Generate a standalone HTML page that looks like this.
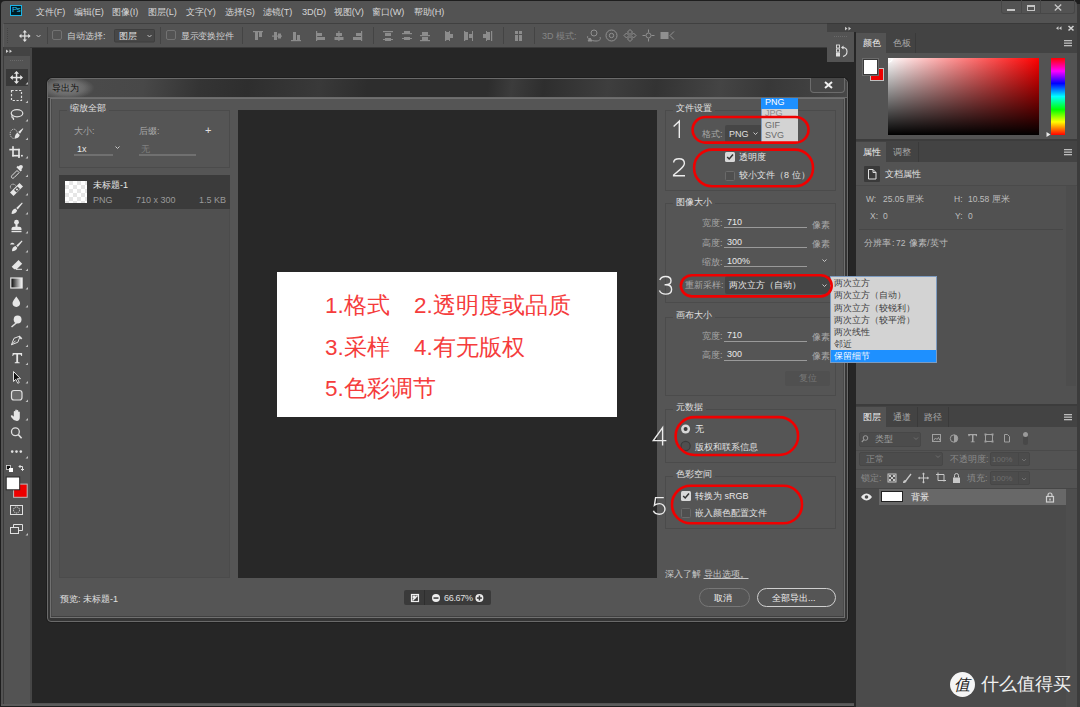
<!DOCTYPE html>
<html><head><meta charset="utf-8">
<style>
*{margin:0;padding:0;box-sizing:border-box}
html,body{width:1080px;height:707px;overflow:hidden;background:#262626;font-family:"Liberation Sans",sans-serif;}
.a{position:absolute}
.t{position:absolute;white-space:nowrap;line-height:12px;font-size:10px;color:#d6d6d6}
.s9{font-size:9px;line-height:12px}
svg{position:absolute;overflow:visible}
</style></head><body>
<!-- ===== FRAME ===== -->
<div class="a" style="left:0;top:0;width:1080px;height:707px;background:#1e1e1e"></div>
<div class="a" style="left:1px;top:1px;width:1076px;height:703px;background:#535353;border-radius:4px 4px 0 0"></div>
<!-- menubar -->
<div id="menubar">
<div class="a" style="left:10px;top:5px;width:12px;height:11px;background:#001d26;border:1px solid #1ab4e8"></div>
<div class="t" style="left:12px;top:4px;font-size:8px;color:#2fc3f2;font-weight:normal;letter-spacing:-0.5px">Ps</div>
<div class="t" style="left:36px;top:6px;font-size:9.2px;letter-spacing:-0.1px">文件(F)</div>
<div class="t" style="left:74px;top:6px;font-size:9.2px;letter-spacing:-0.1px">编辑(E)</div>
<div class="t" style="left:112px;top:6px;font-size:9.2px;letter-spacing:-0.1px">图像(I)</div>
<div class="t" style="left:148px;top:6px;font-size:9.2px;letter-spacing:-0.1px">图层(L)</div>
<div class="t" style="left:186px;top:6px;font-size:9.2px;letter-spacing:-0.1px">文字(Y)</div>
<div class="t" style="left:225px;top:6px;font-size:9.2px;letter-spacing:-0.1px">选择(S)</div>
<div class="t" style="left:263px;top:6px;font-size:9.2px;letter-spacing:-0.1px">滤镜(T)</div>
<div class="t" style="left:302px;top:6px;font-size:9.2px;letter-spacing:-0.1px">3D(D)</div>
<div class="t" style="left:334px;top:6px;font-size:9.2px;letter-spacing:-0.1px">视图(V)</div>
<div class="t" style="left:372px;top:6px;font-size:9.2px;letter-spacing:-0.1px">窗口(W)</div>
<div class="t" style="left:414px;top:6px;font-size:9.2px;letter-spacing:-0.1px">帮助(H)</div>
<!-- window controls -->
<div class="a" style="left:1001px;top:0;width:74px;height:14px;border:1px solid #474747;border-top:none;border-radius:0 0 3px 3px"></div>
<div class="a" style="left:1021px;top:0;width:1px;height:14px;background:#474747"></div>
<div class="a" style="left:1040px;top:0;width:1px;height:14px;background:#474747"></div>
<div class="a" style="left:1007px;top:9px;width:8px;height:1.6px;background:#c4c4c4"></div>
<div class="a" style="left:1027px;top:5px;width:8px;height:6px;border:1.5px solid #c4c4c4;border-top-width:2px"></div>
<svg style="left:1054px;top:4px" width="8" height="7"><path d="M0.8 0.5L7.2 6.5M7.2 0.5L0.8 6.5" stroke="#c8c8c8" stroke-width="1.3"/></svg>
</div>

<!-- left strip + workspace -->
<div class="a" style="left:3px;top:47px;width:1px;height:657px;background:#3c3c3c"></div>
<div class="a" style="left:32px;top:47px;width:795px;height:656px;background:#262626"></div>
<div class="a" style="left:827px;top:62px;width:27px;height:641px;background:#262626"></div>
<div class="a" style="left:30px;top:47px;width:2px;height:656px;background:#464646"></div>
<div class="a" style="left:1px;top:704px;width:855px;height:2px;background:#5c5c5c"></div>

<!-- options bar -->
<div id="optbar">
<div class="a" style="left:3px;top:23px;width:824px;height:24px;background:#535353;border-top:1px solid #404040;border-left:1px solid #5e5e5e"></div>
<div class="a" style="left:4px;top:47px;width:823px;height:1px;background:#3a3a3a"></div>
<svg style="left:0;top:0" width="830" height="50">
<g stroke="#444" stroke-width="1" stroke-dasharray="1 1"><path d="M7.5 28V44"/></g>
<g stroke="#444" stroke-width="1"><path d="M47.5 27V44M160.5 27V44M242.5 27V44M373.5 27V44M503.5 27V44M534.5 27V44"/></g>
<!-- move icon -->
<g fill="#e0e0e0"><rect x="24.2" y="31.5" width="1.2" height="9"/><rect x="20" y="35.4" width="9.6" height="1.2"/>
<path d="M24.8 30l2.2 2.4h-4.4z M24.8 42l2.2-2.4h-4.4z M19 36l2.4-2.2v4.4z M30.6 36l-2.4-2.2v4.4z"/></g>
<path d="M36.5 35l2 2 2-2" stroke="#bdbdbd" fill="none" stroke-width="1"/>
<rect x="52.5" y="30.5" width="9" height="9" rx="1.5" fill="none" stroke="#727272"/>
<rect x="114.5" y="29.5" width="40" height="12.5" rx="1" fill="#474747" stroke="#3e3e3e"/>
<path d="M147.5 35l2 2 2-2" stroke="#bdbdbd" fill="none" stroke-width="1"/>
<rect x="166.5" y="30.5" width="9" height="9" rx="1.5" fill="none" stroke="#727272"/>
<!-- align icons -->
<g fill="#8c8c8c">
<rect x="253" y="31" width="10" height="1.2"/><rect x="255" y="32" width="3" height="8"/><rect x="259" y="32" width="3" height="5"/>
<rect x="272" y="35.5" width="10" height="1.2"/><rect x="274" y="32" width="3" height="8"/><rect x="278" y="33.5" width="3" height="5"/>
<rect x="291" y="40" width="10" height="1.2"/><rect x="293" y="32" width="3" height="8"/><rect x="297" y="35" width="3" height="5"/>
<rect x="316" y="31" width="1.2" height="10"/><rect x="317" y="33" width="5" height="3"/><rect x="317" y="37" width="8" height="3"/>
<rect x="338.3" y="31" width="1.2" height="10"/><rect x="336" y="33" width="6" height="3"/><rect x="334.5" y="37" width="9" height="3"/>
<rect x="361" y="31" width="1.2" height="10"/><rect x="356" y="33" width="5" height="3"/><rect x="353" y="37" width="8" height="3"/>
<rect x="383" y="31" width="10" height="1.2"/><rect x="385" y="33" width="6" height="3"/><rect x="385" y="38" width="6" height="3"/><rect x="383" y="39" width="10" height="1"/>
<rect x="402" y="33" width="10" height="1.2"/><rect x="404" y="31" width="6" height="3"/><rect x="404" y="37" width="6" height="3"/><rect x="402" y="38" width="10" height="1"/>
<rect x="420" y="35" width="10" height="1.2"/><rect x="422" y="32" width="6" height="3"/><rect x="422" y="37" width="6" height="3"/><rect x="420" y="40" width="10" height="1.2"/>
<rect x="445" y="31" width="1.2" height="10"/><rect x="446" y="32" width="3" height="8"/><rect x="450" y="34" width="3" height="4"/><rect x="449" y="31" width="1" height="10"/>
<rect x="464" y="31" width="1.2" height="10"/><rect x="465" y="32" width="3" height="8"/><rect x="469" y="34" width="3" height="4"/><rect x="472" y="31" width="1" height="10"/>
<rect x="491" y="31" width="1.2" height="10"/><rect x="487" y="32" width="3" height="8"/><rect x="483" y="34" width="3" height="4"/><rect x="486" y="31" width="1" height="10"/>
<rect x="515" y="31" width="3" height="3"/><rect x="519" y="31" width="3" height="3"/><rect x="515" y="35" width="3" height="6"/><rect x="519" y="35" width="3" height="6"/>
</g>
<!-- 3d icons -->
<g stroke="#909090" fill="none" stroke-width="1">
<circle cx="594" cy="33" r="3"/><path d="M588 36c-2 2 2 5 8 5 4 0 5-2 4-4"/><path d="M590 38l-2 3h4z" fill="#909090"/>
<circle cx="611.5" cy="35.5" r="5.5"/><circle cx="611.5" cy="35.5" r="2.2"/>
<path d="M630 29.5l2.5 2.5-2.5 2.5-2.5-2.5z M630 36.5l2.5 2.5-2.5 2.5-2.5-2.5z M626.5 33l2.5 2.5-2.5 2.5-2.5-2.5z M633.5 33l2.5 2.5-2.5 2.5-2.5-2.5z"/>
<circle cx="648.5" cy="35.5" r="2.5"/><path d="M648.5 29.5v3M648.5 38.5v3M642.5 35.5h3M651.5 35.5h3"/>
<rect x="661" y="32.5" width="7" height="6" fill="#909090"/><path d="M674 31.5l-4 4 4 4"/>
</g>
</svg>
<div class="t s9" style="left:67px;top:30px;color:#d0d0d0">自动选择:</div>
<div class="t s9" style="left:119px;top:30px;color:#e0e0e0">图层</div>
<div class="t s9" style="left:181px;top:30px;color:#d0d0d0;letter-spacing:-0.3px">显示变换控件</div>
<div class="t s9" style="left:542px;top:30px;color:#858585">3D 模式:</div>
</div>

<!-- toolbar -->
<div id="toolbar">
<div class="a" style="left:4px;top:47px;width:26px;height:9px;background:#434343"></div>
<div class="a" style="left:4px;top:56px;width:26px;height:647px;background:#535353"></div>
<div class="a" style="left:6px;top:69px;width:22px;height:17px;background:#393939"></div>
<svg style="left:0;top:0" width="32" height="707">
<g fill="#d0d0d0"><path d="M6 49.5l2.5 1.7-2.5 1.7z M9.5 49.5l2.5 1.7-2.5 1.7z"/></g>
<g stroke="#6a6a6a" stroke-dasharray="1 1"><path d="M10 60.5H24"/></g>
<!-- corner triangles -->
<g fill="#bfbfbf">
<path d="M28 82v2.5h-2.5z"/><path d="M28 100.5v2.5h-2.5z"/><path d="M28 119v2.5h-2.5z"/><path d="M28 137.5v2.5h-2.5z"/><path d="M28 156v2.5h-2.5z"/>
<path d="M28 174.5v2.5h-2.5z"/><path d="M28 193v2.5h-2.5z"/><path d="M28 212v2.5h-2.5z"/><path d="M28 231v2.5h-2.5z"/><path d="M28 250v2.5h-2.5z"/>
<path d="M28 268.5v2.5h-2.5z"/><path d="M28 287v2.5h-2.5z"/><path d="M28 305v2.5h-2.5z"/><path d="M28 325v2.5h-2.5z"/><path d="M28 344.5v2.5h-2.5z"/>
<path d="M28 362.5v2.5h-2.5z"/><path d="M28 381v2.5h-2.5z"/><path d="M28 399.5v2.5h-2.5z"/><path d="M28 418v2.5h-2.5z"/><path d="M28 456v2.5h-2.5z"/><path d="M28 533v2.5h-2.5z"/>
</g>
<g fill="#e6e6e6" stroke="none">
<!-- move -->
<rect x="15.8" y="72.5" width="1.5" height="10"/><rect x="11.5" y="76.8" width="10" height="1.5"/>
<path d="M16.5 71l2.6 2.8h-5.2z M16.5 84l2.6-2.8h-5.2z M10 77.5l2.8-2.6v5.2z M23 77.5l-2.8-2.6v5.2z"/>
<!-- quick select brush -->
<path d="M22.8 128.3l0.5 0.5-3.3 5-1.8-1.8z M17.6 132.8l2.2 2.2c-0.6 2.4-2.6 3.5-5.2 3.5 0.2-2.8 1.3-5 3-5.7z"/>
<!-- crop -->
<rect x="12.2" y="146.2" width="1.6" height="10.3"/><rect x="12.2" y="154.9" width="7.6" height="1.6"/>
<rect x="9.3" y="148.8" width="10.5" height="1.6"/><rect x="18.2" y="148.8" width="1.6" height="9.2"/><rect x="21" y="154.9" width="1.8" height="1.6"/>
<!-- eyedropper -->
<path d="M19.5 165.5c0.8-0.8 2.2-0.8 2.8 0 0.7 0.7 0.7 2 0 2.7l-1 1 0.8 0.8-1.5 1.5-4.2-4.2 1.5-1.5 0.8 0.8z"/>
<!-- healing -->
<path d="M19.5 183l3.5 3.5-9.5 9.5-3.5-3.5z"/><path d="M17.5 186.5l2.5 2.5-3.5 3.5-2.5-2.5z" fill="#535353"/><path d="M17 188.3l1.2 1.2-1.2 1.2-1.2-1.2z"/>
<!-- brush -->
<path d="M22 202.5l0.7 0.7-5 6.2-1.5-1.5z M15.3 208.5l1.8 1.8c-0.5 2.5-2.5 3.8-5.5 3.8 0-3 1.2-5 3.7-5.6z"/>
<!-- stamp -->
<circle cx="16.5" cy="222.2" r="2.4"/><rect x="15.5" y="223.5" width="2" height="3.5"/><path d="M11.5 229c0-1.3 1-2.2 2.2-2.2h5.6c1.2 0 2.2 0.9 2.2 2.2v1h-10z"/><rect x="11.5" y="230.8" width="10" height="1.4"/>
<!-- history brush -->
<path d="M21.8 240.5l0.7 0.7-4.7 5.8-1.5-1.5z M15.5 246l1.8 1.8c-0.5 2.3-2.3 3.5-5.3 3.5 0-2.8 1.1-4.7 3.5-5.3z"/>
<path d="M10 244.5c0.5-1.3 1.5-1.8 2.5-1.8s1.8 0.8 2 1.8z"/>
<!-- eraser -->
<path d="M18.5 260l3.7 3.7-5.5 5.5h-2.5l-2.5-2.5z" /><rect x="16" y="268.8" width="6" height="1"/>
<!-- blur -->
<path d="M16.3 296.6c-1.6 2.6-3.8 4.8-3.8 6.5a3.8 3.8 0 0 0 7.6 0c0-1.7-2.2-3.9-3.8-6.5z"/>
<!-- dodge -->
<circle cx="17.6" cy="319.5" r="3.9"/>
<!-- pen -->
<path d="M19.5 335.5l2.8 2.8-1.2 1.2-2.8-2.8z"/>
<!-- type -->
<path d="M12.7 353h9.4v3h-0.8c-0.2-1-0.6-1.6-1.6-1.6h-1.6v7.2c0 0.7 0.3 0.8 1.6 0.8v0.8h-5v-0.8c1.3 0 1.6-0.1 1.6-0.8v-7.2h-1.6c-1 0-1.4 0.6-1.6 1.6h-0.8z"/>
<!-- hand -->
<path d="M13.8 420c-1.5-1.5-3-3.3-3-4 0-0.8 1-1 2-0.2l1 1v-5.3c0-0.8 1.5-0.8 1.5 0v3.5-5c0-0.8 1.5-0.8 1.5 0v5-4.3c0-0.8 1.5-0.8 1.5 0v4.5-3c0-0.8 1.5-0.8 1.5 0v5.3c0 2-1.2 3.5-3 3.5z"/>
</g>
<g stroke="#e0e0e0" fill="none" stroke-width="1.2">
<rect x="11.5" y="90.5" width="10" height="10" stroke-dasharray="2.2 1.6"/>
<ellipse cx="17" cy="113.3" rx="5.8" ry="3.6"/><path d="M12.5 115c-1 1.2-0.7 2.7 0.5 3.2 M13.5 117.5v2.5"/>
<ellipse cx="13.8" cy="133.8" rx="3.6" ry="4.6" stroke-dasharray="1 0.9" stroke-width="0.9"/>
<path d="M12 175.5c-0.8 0.8-0.8 1.7-0.2 2.3s1.5 0.6 2.3-0.2l5-5-2.1-2.1z" stroke-width="1"/>
<path d="M15.5 185.3c-1-1.2-3-1.6-4.2-0.5-1.3 1.1-1.2 2.9-0.2 3.9" stroke-dasharray="1.2 0.9" stroke-width="1"/>
<path d="M16.5 322.8l-5 4.2" stroke-width="1.5"/>
<path d="M18.8 336.5l-4.8 1.8-2.6 6.5 6.5-2.6 1.8-4.8z M11.8 344.5l3.8-3.8" stroke-width="1"/>
<rect x="11.5" y="390.5" width="10.5" height="9.5" rx="2.5" fill="#6a6a6a"/>
<circle cx="15.4" cy="431.7" r="3.9" stroke-width="1.3"/><path d="M18.3 434.6l3.3 3.6" stroke-width="1.6"/>
<path d="M9 469.5h3.5M19 466.5h3.5v4 M19 466.5l1.5-1.5M19 466.5l1.5 1.5 M22.5 470.5l-1.5-1.5M22.5 470.5l1.5-1.5" stroke-width="1"/>
<rect x="10.5" y="505.5" width="12" height="9" stroke-width="1"/><circle cx="16.5" cy="510" r="3" stroke-width="1" stroke-dasharray="1.2 0.8"/>
<rect x="10.5" y="527.5" width="8" height="6" stroke-width="1"/><path d="M13.5 527.5v-3h9v6h-4" stroke-width="1"/>
</g>
<rect x="10.8" y="278" width="11.3" height="10" fill="url(#grd)" stroke="#e6e6e6" stroke-width="1.2"/>
<defs><linearGradient id="grd"><stop offset="0" stop-color="#000"/><stop offset="1" stop-color="#fff"/></linearGradient></defs>
<path d="M13.5 371.5v10l2.3-2.2 2 4 1.5-0.8-2-3.8h3.2z" fill="#111" stroke="#e0e0e0" stroke-width="1"/>
<g fill="#e0e0e0"><circle cx="12.2" cy="451.6" r="1.3"/><circle cx="16.5" cy="451.6" r="1.3"/><circle cx="20.8" cy="451.6" r="1.3"/></g>
<rect x="6.5" y="465.5" width="4" height="4" fill="#111" stroke="#ddd" stroke-width="0.8"/><rect x="9" y="468" width="4" height="4" fill="#fff"/>
<rect x="13.6" y="484.1" width="13.6" height="13.2" fill="#ee0000" stroke="#bdbdbd" stroke-width="1"/>
<rect x="6.2" y="477" width="13.5" height="12.8" fill="#ffffff" stroke="#2a2a2a" stroke-width="1"/>
</svg>
</div>

<!-- right dock -->
<div id="dock">
<div class="a" style="left:827px;top:23px;width:250px;height:9px;background:#434343;border-top:1px solid #393939"></div>
<div class="a" style="left:827px;top:32px;width:27px;height:30px;background:#535353"></div>
<div class="a" style="left:854px;top:32px;width:2px;height:675px;background:#262626"></div>
<div class="a" style="left:856px;top:32px;width:221px;height:675px;background:#535353"></div>
<div class="a" style="left:1077px;top:4px;width:3px;height:703px;background:#3c3c3c"></div>
<!-- color panel -->
<div class="a" style="left:856px;top:32px;width:221px;height:21px;background:#434343"></div>
<div class="a" style="left:856px;top:33px;width:30px;height:20px;background:#535353"></div>
<div class="a" style="left:915px;top:33px;width:1px;height:20px;background:#3a3a3a"></div>
<div class="t s9" style="left:863px;top:37px;color:#f0f0f0">颜色</div>
<div class="t s9" style="left:893px;top:37px;color:#a8a8a8">色板</div>
<div class="a" style="left:888px;top:58px;width:151px;height:77px;background:linear-gradient(to bottom,rgba(0,0,0,0),#000),linear-gradient(to right,#fff,#f00)"></div>
<div class="a" style="left:1051px;top:58px;width:14px;height:77px;background:linear-gradient(to bottom,#f00 0%,#f0f 17%,#00f 33%,#0ff 50%,#0f0 67%,#ff0 83%,#f00 100%)"></div>
<div class="a" style="left:870px;top:68px;width:14px;height:13px;background:#ee0000;border:1px solid #c0c0c0"></div>
<div class="a" style="left:863px;top:59px;width:15px;height:16px;background:#fff;border:1px solid #3a3a3a;box-shadow:0 0 0 1px #6a6a6a"></div>
<div class="a" style="left:856px;top:139px;width:221px;height:2px;background:#3c3c3c"></div>
<!-- properties -->
<div class="a" style="left:856px;top:141px;width:221px;height:21px;background:#434343"></div>
<div class="a" style="left:856px;top:142px;width:30px;height:20px;background:#535353"></div>
<div class="a" style="left:918px;top:142px;width:1px;height:20px;background:#3a3a3a"></div>
<div class="t s9" style="left:863px;top:146px;color:#f0f0f0">属性</div>
<div class="t s9" style="left:893px;top:146px;color:#a8a8a8">调整</div>
<div class="a" style="left:864px;top:166px;width:16px;height:16px;background:#3a3a3a;border-radius:1px"></div>
<div class="t s9" style="left:885px;top:168px;color:#e0e0e0">文档属性</div>
<div class="a" style="left:856px;top:185px;width:221px;height:219px;background:#515151;border-top:1px solid #4a4a4a"></div>
<div class="a" style="left:1066px;top:186px;width:10px;height:200px;background:#4d4d4d"></div>
<div class="a" style="left:859px;top:229px;width:204px;height:1px;background:#474747"></div>
<div class="t" style="left:866px;top:193px;font-size:8.5px;color:#bdbdbd">W:</div>
<div class="t" style="left:883px;top:193px;font-size:8.5px;color:#bdbdbd">25.05</div>
<div class="t s9" style="left:906px;top:193px;color:#bdbdbd">厘米</div>
<div class="t" style="left:954px;top:193px;font-size:8.5px;color:#bdbdbd">H:</div>
<div class="t" style="left:968px;top:193px;font-size:8.5px;color:#bdbdbd">10.58</div>
<div class="t s9" style="left:992px;top:193px;color:#bdbdbd">厘米</div>
<div class="t" style="left:870px;top:210px;font-size:8.5px;color:#bdbdbd">X:</div>
<div class="t" style="left:883px;top:210px;font-size:8.5px;color:#bdbdbd">0</div>
<div class="t" style="left:955px;top:210px;font-size:8.5px;color:#bdbdbd">Y:</div>
<div class="t" style="left:968px;top:210px;font-size:8.5px;color:#bdbdbd">0</div>
<div class="t s9" style="left:864px;top:237px;color:#bdbdbd">分辨率</div><div class="t s9" style="left:892px;top:237px;color:#bdbdbd">:</div><div class="t" style="left:896px;top:237px;font-size:8.5px;color:#bdbdbd">72</div><div class="t s9" style="left:909px;top:237px;color:#bdbdbd">像素</div><div class="t s9" style="left:927px;top:237px;color:#bdbdbd">/英寸</div>
<div class="a" style="left:856px;top:404px;width:221px;height:2px;background:#3c3c3c"></div>
<!-- layers -->
<div class="a" style="left:856px;top:406px;width:221px;height:21px;background:#434343"></div>
<div class="a" style="left:856px;top:407px;width:30px;height:20px;background:#535353"></div>
<div class="a" style="left:917px;top:407px;width:1px;height:20px;background:#3a3a3a"></div>
<div class="a" style="left:948px;top:407px;width:1px;height:20px;background:#3a3a3a"></div>
<div class="t s9" style="left:863px;top:411px;color:#f0f0f0">图层</div>
<div class="t s9" style="left:893px;top:411px;color:#a8a8a8">通道</div>
<div class="t s9" style="left:924px;top:411px;color:#a8a8a8">路径</div>
<div class="a" style="left:859px;top:432px;width:62px;height:15px;background:#4c4c4c;border:1px solid #474747;border-radius:2px"></div>
<div class="t s9" style="left:875px;top:433px;color:#a0a0a0">类型</div>
<div class="a" style="left:856px;top:450px;width:221px;height:1px;background:#4a4a4a"></div>
<div class="a" style="left:859px;top:452px;width:84px;height:14px;background:#4c4c4c;border:1px solid #474747;border-radius:2px"></div>
<div class="t s9" style="left:866px;top:453px;color:#8a8a8a">正常</div>
<div class="t s9" style="left:950px;top:453px;color:#8a8a8a">不透明度:</div>
<div class="a" style="left:990px;top:452px;width:40px;height:14px;background:#4c4c4c;border:1px solid #474747;border-radius:2px"></div>
<div class="a" style="left:1018px;top:452px;width:1px;height:14px;background:#474747"></div>
<div class="t" style="left:992px;top:454px;font-size:8px;color:#6e6e6e">100%</div>
<div class="a" style="left:856px;top:469px;width:221px;height:1px;background:#4a4a4a"></div>
<div class="t s9" style="left:861px;top:472px;color:#8a8a8a">锁定:</div>
<div class="t s9" style="left:967px;top:472px;color:#8a8a8a">填充:</div>
<div class="a" style="left:990px;top:471px;width:40px;height:14px;background:#4c4c4c;border:1px solid #474747;border-radius:2px"></div>
<div class="a" style="left:1018px;top:471px;width:1px;height:14px;background:#474747"></div>
<div class="t" style="left:992px;top:473px;font-size:8px;color:#6e6e6e">100%</div>
<div class="a" style="left:856px;top:488px;width:221px;height:219px;background:#4b4b4b"></div>
<div class="a" style="left:856px;top:488px;width:221px;height:1px;background:#464646"></div>
<div class="a" style="left:1066px;top:489px;width:11px;height:218px;background:#4e4e4e"></div>
<div class="a" style="left:879px;top:489px;width:187px;height:16px;background:#686868"></div>
<div class="a" style="left:881px;top:491px;width:22px;height:11px;background:#fff;border:1px solid #222"></div>
<div class="t s9" style="left:911px;top:491px;color:#f0f0f0">背景</div>
<div class="t" style="left:981px;top:673px;font-size:17.5px;line-height:22px;color:#f0f0f0;letter-spacing:0px">什么值得买</div>
<div class="a" style="left:950px;top:672px;width:25px;height:25px;border-radius:50%;background:#f5f5f5"></div>
<div class="t" style="left:954px;top:675px;font-size:16px;line-height:19px;color:#222;font-style:italic">值</div>
<svg style="left:0;top:0" width="1080" height="707">
<!-- top strip arrows -->
<g fill="#c8c8c8"><path d="M845 26.8l2.5 1.8-2.5 1.8z M848.5 26.8l2.5 1.8-2.5 1.8z"/>
<path d="M1058.5 26.3l-2.5 1.9 2.5 1.9z M1061.5 26.3l-2.5 1.9 2.5 1.9z"/></g>
<path d="M1068.5 26l5 4.5M1073.5 26l-5 4.5" stroke="#d0d0d0" stroke-width="1.6"/>
<g stroke="#6a6a6a" stroke-dasharray="1 1"><path d="M834 36.5H848"/></g>
<!-- history icon -->
<g fill="#e0e0e0"><rect x="836.5" y="45" width="3" height="3" fill="none" stroke="#e0e0e0" stroke-width="0.9"/><rect x="836.5" y="49" width="3" height="3" fill="none" stroke="#e0e0e0" stroke-width="0.9"/><rect x="836" y="52.5" width="4" height="4"/></g>
<path d="M842.5 47.5c3 0 4.5 1.5 4.5 4s-2 4.5-4 5" stroke="#e0e0e0" fill="none" stroke-width="1.1"/><path d="M841 47.5l2.5-2v4z" fill="#e0e0e0"/>
<!-- panel menus -->
<g fill="#bdbdbd"><rect x="1064" y="40" width="8" height="1.3"/><rect x="1064" y="42.5" width="8" height="1.3"/><rect x="1064" y="45" width="8" height="1.3"/>
<rect x="1064" y="149" width="8" height="1.3"/><rect x="1064" y="151.5" width="8" height="1.3"/><rect x="1064" y="154" width="8" height="1.3"/>
<rect x="1064" y="414" width="8" height="1.3"/><rect x="1064" y="416.5" width="8" height="1.3"/><rect x="1064" y="419" width="8" height="1.3"/></g>
<!-- color cursor & slider -->
<path d="M888.4 62.2A3.8 3.8 0 0 0 892.2 58.4" fill="none" stroke="#fff" stroke-width="1.3"/>
<path d="M1046.5 132v5l4-2.5z" fill="#e8e8e8"/>
<!-- doc icon -->
<path d="M868.5 169.5h4.5l3 3v6.5h-7.5z M873 169.5v3h3" fill="none" stroke="#e0e0e0" stroke-width="1"/>
<!-- layers filter -->
<circle cx="865.5" cy="438" r="2.3" fill="none" stroke="#9a9a9a" stroke-width="1"/><path d="M864 439.7l-2.2 2.3" stroke="#9a9a9a" stroke-width="1.1"/>
<path d="M914 437.5l2 2 2-2" stroke="#6e6e6e" fill="none"/>
<path d="M936 455.5l2 2 2-2" stroke="#6e6e6e" fill="none"/>
<path d="M1022 459l2 2 2-2" stroke="#6e6e6e" fill="none"/><path d="M1022 478l2 2 2-2" stroke="#6e6e6e" fill="none"/>
<g fill="none" stroke="#a0a0a0" stroke-width="1">
<rect x="932.5" y="434.5" width="8" height="7"/><path d="M933.5 440.5l2-2.5 1.5 1.5 1.5-2 1.5 3"/>
<circle cx="954" cy="438.5" r="3.7"/>
<rect x="985.5" y="434.5" width="7" height="7"/>
<path d="M1004.5 434.5h3l2 2v5.5h-5z"/>
</g>
<path d="M954 434.8a3.7 3.7 0 0 1 0 7.4z" fill="#a0a0a0"/>
<path d="M968 434h9v2.2h-0.8l-0.7-1h-2v6.3h1.2v0.8h-3.9v-0.8h1.2v-6.3h-2l-0.7 1h-0.8z" fill="#a8a8a8"/>
<g fill="#a0a0a0"><rect x="984.5" y="433.5" width="2" height="2"/><rect x="991.5" y="433.5" width="2" height="2"/><rect x="984.5" y="440.5" width="2" height="2"/><rect x="991.5" y="440.5" width="2" height="2"/></g>
<rect x="1023" y="432" width="5" height="13" rx="2.5" fill="#484848"/><circle cx="1025.5" cy="434.5" r="2.5" fill="#9a9a9a"/>
<!-- lock row icons -->
<g fill="#c8c8c8">
<rect x="888" y="474" width="8" height="8" fill="none" stroke="#c8c8c8" stroke-width="1"/>
<rect x="889" y="475" width="2" height="2"/><rect x="893" y="475" width="2" height="2"/><rect x="891" y="477" width="2" height="2"/><rect x="889" y="479" width="2" height="2"/><rect x="893" y="479" width="2" height="2"/>
<path d="M903 483c0-2 1-3 2.5-3l5-6.5 1 1-5 6.5c0 1.5-1.5 2-3.5 2z"/>
<path d="M1040 500.5h7v-4.5h-7z" fill="none"/>
<rect x="953" y="477.5" width="7" height="5.5"/>
</g>
<g stroke="#c8c8c8" fill="none" stroke-width="1">
<path d="M923.5 473v10M918.5 478h10"/>
<path d="M936 474.5h8v7 M938 472.5v8h8"/>
<path d="M954.5 477.5v-2a2 2 0 0 1 4 0v2"/>
</g>
<g fill="#c8c8c8"><path d="M923.5 472.5l1.6 1.8h-3.2z M923.5 483.5l1.6-1.8h-3.2z M918 478l1.8-1.6v3.2z M929 478l-1.8-1.6v3.2z"/></g>
<!-- eye -->
<path d="M861 497c2-2.8 4-3.5 5.5-3.5s3.5 0.7 5.5 3.5c-2 2.8-4 3.5-5.5 3.5s-3.5-0.7-5.5-3.5z" fill="#e8e8e8"/>
<circle cx="866.5" cy="497" r="1.8" fill="#4b4b4b"/>
<!-- layer lock -->
<rect x="1046.5" y="496.5" width="7" height="5.5" fill="none" stroke="#d0d0d0" stroke-width="1.2"/>
<path d="M1048 496.5v-1.5a2 2 0 0 1 4 0v1.5" fill="none" stroke="#d0d0d0" stroke-width="1.2"/>
<rect x="1049.3" y="498.5" width="1.4" height="2" fill="#d0d0d0"/>
</svg>
</div>


<!-- dialog -->
<div id="dialog">
<div class="a" style="left:47px;top:78px;width:801px;height:544px;background:#353535;border:1px solid #6a6a6a;border-radius:5px 5px 4px 4px;box-shadow:0 0 0 1px #1e1e1e"></div>
<div class="a" style="left:48px;top:79px;width:799px;height:19px;border-radius:4px 4px 0 0;background:linear-gradient(97deg,#4c4c4c 0%,#484848 12%,#343434 19%,#2e2e2e 25%,#393939 34%,#2d2d2d 40%,#2d2d2d 55%,#3c3c3c 58%,#2e2e2e 62%,#3e3e3e 70%,#333333 76%,#444444 84%,#383838 90%,#474747 100%)"></div>
<div class="a" style="left:48px;top:97px;width:799px;height:1px;background:#6a6a6a"></div>
<div class="a" style="left:50px;top:98px;width:795px;height:520px;background:#555555;border:1px solid #707070"></div>
<div class="a" style="left:51px;top:616px;width:793px;height:1px;background:#404040"></div><div class="a" style="left:51px;top:99px;width:1px;height:517px;background:#4a4a4a"></div><div class="a" style="left:843px;top:99px;width:1px;height:517px;background:#4a4a4a"></div>
<div class="a" style="left:48px;top:79px;width:60px;height:18px;overflow:hidden;border-radius:4px 0 0 0"><div class="a" style="left:-8px;top:-2px;width:54px;height:22px;background:radial-gradient(ellipse at center,rgba(135,135,135,0.9) 0%,rgba(125,125,125,0.6) 45%,rgba(110,110,110,0) 72%)"></div></div><div class="t" style="left:52px;top:82px;color:#0c0c0c;font-size:9.3px">导出为</div>
<!-- close btn -->
<div class="a" style="left:810px;top:78px;width:35px;height:15px;border:1px solid #6c6c6c;border-top:none;border-radius:0 0 4px 4px;background:#474747"></div>
<svg style="left:824px;top:81px" width="9" height="8"><path d="M1 1L8 7M8 1L1 7" stroke="#f0f0f0" stroke-width="2"/></svg>

<!-- left column -->
<div class="a" style="left:59px;top:110px;width:171px;height:58px;border:1px solid #4b4b4b"></div>
<div class="a" style="left:67px;top:104px;width:42px;height:9px;background:#555555"></div>
<div class="t s9" style="left:70px;top:102px;color:#e0e0e0">缩放全部</div>
<div class="t s9" style="left:74px;top:125px;color:#a8a8a8">大小:</div>
<div class="t s9" style="left:139px;top:125px;color:#a8a8a8">后缀:</div>
<div class="t" style="left:205px;top:124px;color:#e0e0e0;font-size:11px">+</div>
<div class="t s9" style="left:77px;top:143px;color:#e8e8e8">1x</div>
<div class="a" style="left:74px;top:154px;width:39px;height:2px;background:#707070"></div>
<svg style="left:115px;top:146px" width="6" height="4"><path d="M0.5 0.5l2 2 2-2" stroke="#c8c8c8" fill="none"/></svg>
<div class="t s9" style="left:141px;top:143px;color:#808080">无</div>
<div class="a" style="left:139px;top:154px;width:57px;height:2px;background:#707070"></div>
<div class="a" style="left:59px;top:175px;width:171px;height:403px;background:#505050;border:1px solid #4b4b4b"></div>
<div class="a" style="left:59px;top:175px;width:171px;height:34px;background:#3b3b3b"></div>
<div class="a" style="left:65px;top:181px;width:22px;height:22px;background-color:#fff;background-image:linear-gradient(45deg,#e6e6e6 25%,transparent 25%,transparent 75%,#e6e6e6 75%),linear-gradient(45deg,#e6e6e6 25%,transparent 25%,transparent 75%,#e6e6e6 75%);background-size:8px 8px;background-position:0 0,4px 4px"></div>
<div class="t s9" style="left:93px;top:179px;color:#e8e8e8">未标题-1</div>
<div class="t s9" style="left:93px;top:194px;color:#9a9a9a">PNG</div>
<div class="t s9" style="left:136px;top:194px;color:#9a9a9a">710 x 300</div>
<div class="t s9" style="left:199px;top:194px;color:#9a9a9a">1.5 KB</div>
<div class="t s9" style="left:60px;top:593px;color:#e0e0e0">预览: 未标题-1</div>

<!-- preview -->
<div class="a" style="left:238px;top:110px;width:419px;height:468px;background:#282828"></div>
<div class="a" style="left:277px;top:272px;width:340px;height:145px;background:#fff"></div>
<div class="t" style="left:325px;top:293px;font-size:22.5px;line-height:26px;color:#f53c3c;font-weight:300">1.格式</div>
<div class="t" style="left:414px;top:293px;font-size:22.5px;line-height:26px;color:#f53c3c;font-weight:300">2.透明度或品质</div>
<div class="t" style="left:325px;top:335px;font-size:22.5px;line-height:26px;color:#f53c3c;font-weight:300">3.采样</div>
<div class="t" style="left:414px;top:335px;font-size:22.5px;line-height:26px;color:#f53c3c;font-weight:300">4.有无版权</div>
<div class="t" style="left:325px;top:376px;font-size:22.5px;line-height:26px;color:#f53c3c;font-weight:300">5.色彩调节</div>
<!-- zoom ctrl -->
<div class="a" style="left:404px;top:590px;width:87px;height:15px;background:#3a3a3a;border-radius:2px"></div>
<div class="a" style="left:424px;top:590px;width:1px;height:15px;background:#2e2e2e"></div>
<svg style="left:0;top:0" width="1080" height="707">
<rect x="411.5" y="594.5" width="7" height="7" fill="none" stroke="#eee" stroke-width="1.2"/><path d="M412.5 600.5l5-5" stroke="#eee" stroke-width="1.5"/><rect x="412.5" y="595.5" width="3" height="3" fill="#eee"/>
<circle cx="436" cy="598" r="4" fill="#eee"/><rect x="433.5" y="597.3" width="5" height="1.5" fill="#3a3a3a"/>
<circle cx="479.4" cy="598" r="4" fill="#eee"/><rect x="476.9" y="597.3" width="5" height="1.5" fill="#3a3a3a"/><rect x="478.7" y="595.5" width="1.5" height="5" fill="#3a3a3a"/>
</svg>
<div class="t" style="left:444px;top:592px;font-size:9px;color:#e0e0e0;letter-spacing:-0.3px">66.67%</div>

<!-- right column groups -->
<div class="a" style="left:665px;top:110px;width:171px;height:81px;border:1px solid #4b4b4b"></div>
<div class="a" style="left:673px;top:104px;width:42px;height:9px;background:#555555"></div>
<div class="t s9" style="left:676px;top:102px;color:#e0e0e0">文件设置</div>
<div class="a" style="left:665px;top:203px;width:171px;height:100px;border:1px solid #4b4b4b"></div>
<div class="a" style="left:673px;top:198px;width:42px;height:9px;background:#555555"></div>
<div class="t s9" style="left:676px;top:196px;color:#e0e0e0">图像大小</div>
<div class="a" style="left:665px;top:317px;width:171px;height:79px;border:1px solid #4b4b4b"></div>
<div class="a" style="left:673px;top:311px;width:42px;height:9px;background:#555555"></div>
<div class="t s9" style="left:676px;top:309px;color:#e0e0e0">画布大小</div>
<div class="a" style="left:665px;top:409px;width:171px;height:54px;border:1px solid #4b4b4b"></div>
<div class="a" style="left:673px;top:403px;width:33px;height:9px;background:#555555"></div>
<div class="t s9" style="left:676px;top:401px;color:#e0e0e0">元数据</div>
<div class="a" style="left:665px;top:476px;width:171px;height:53px;border:1px solid #4b4b4b"></div>
<div class="a" style="left:673px;top:470px;width:42px;height:9px;background:#555555"></div>
<div class="t s9" style="left:676px;top:468px;color:#e0e0e0">色彩空间</div>

<!-- file settings -->
<div class="t s9" style="left:702px;top:128px;color:#a8a8a8">格式:</div>
<div class="a" style="left:725px;top:125px;width:37px;height:18px;background:#464646;border-radius:2px"></div>
<div class="t s9" style="left:729px;top:128px;color:#e0e0e0">PNG</div>
<svg style="left:753px;top:132px" width="6" height="4"><path d="M0.5 0.5l2 2 2-2" stroke="#c8c8c8" fill="none"/></svg>
<div class="a" style="left:725px;top:152px;width:10px;height:10px;background:#d8d8d8;border-radius:1.5px"></div>
<svg style="left:726px;top:153px" width="8" height="8"><path d="M1.2 4l2 2 3.8-4.5" stroke="#333" stroke-width="1.5" fill="none"/></svg>
<div class="t s9" style="left:739px;top:151px;color:#e8e8e8">透明度</div>
<div class="a" style="left:725px;top:171px;width:10px;height:10px;border:1px solid #6a6a6a;border-radius:1.5px;background:#4f4f4f"></div>
<div class="t s9" style="left:739px;top:169px;color:#e0e0e0">较小文件（8 位）</div>

<!-- image size -->
<div class="t s9" style="left:702px;top:217px;color:#a8a8a8">宽度:</div>
<div class="t s9" style="left:727px;top:216px;color:#e8e8e8">710</div>
<div class="a" style="left:724px;top:227px;width:83px;height:1px;background:#9a9a9a"></div>
<div class="t s9" style="left:812px;top:219px;color:#a8a8a8">像素</div>
<div class="t s9" style="left:702px;top:237px;color:#a8a8a8">高度:</div>
<div class="t s9" style="left:727px;top:236px;color:#e8e8e8">300</div>
<div class="a" style="left:724px;top:247px;width:83px;height:1px;background:#9a9a9a"></div>
<div class="t s9" style="left:812px;top:238px;color:#a8a8a8">像素</div>
<div class="t s9" style="left:702px;top:256px;color:#a8a8a8">缩放:</div>
<div class="t s9" style="left:727px;top:255px;color:#e8e8e8">100%</div>
<div class="a" style="left:724px;top:266px;width:83px;height:1px;background:#9a9a9a"></div>
<svg style="left:822px;top:259px" width="6" height="4"><path d="M0.5 0.5l2 2 2-2" stroke="#c8c8c8" fill="none"/></svg>
<div class="t s9" style="left:685px;top:279px;color:#a8a8a8">重新采样:</div>
<div class="a" style="left:725px;top:276px;width:105px;height:18px;background:#454545;border-radius:2px"></div>
<div class="t s9" style="left:729px;top:279px;color:#e8e8e8">两次立方（自动）</div>
<svg style="left:822px;top:284px" width="6" height="4"><path d="M0.5 0.5l2 2 2-2" stroke="#c8c8c8" fill="none"/></svg>

<!-- canvas size -->
<div class="t s9" style="left:702px;top:330px;color:#a8a8a8">宽度:</div>
<div class="t s9" style="left:727px;top:329px;color:#e8e8e8">710</div>
<div class="a" style="left:724px;top:341px;width:83px;height:1px;background:#9a9a9a"></div>
<div class="t s9" style="left:812px;top:331px;color:#a8a8a8">像素</div>
<div class="t s9" style="left:702px;top:349px;color:#a8a8a8">高度:</div>
<div class="t s9" style="left:727px;top:348px;color:#e8e8e8">300</div>
<div class="a" style="left:724px;top:360px;width:83px;height:1px;background:#9a9a9a"></div>
<div class="t s9" style="left:812px;top:350px;color:#a8a8a8">像素</div>
<div class="a" style="left:785px;top:371px;width:45px;height:15px;background:#505050;border-radius:2px"></div>
<div class="t s9" style="left:799px;top:372px;color:#777">复位</div>

<!-- metadata -->
<svg style="left:0;top:0" width="1080" height="707">
<circle cx="685.6" cy="429" r="4.5" fill="#d8d8d8"/><circle cx="685.6" cy="429" r="2" fill="#3a3a3a"/>
<circle cx="685.6" cy="446" r="4.6" fill="#4f4f4f" stroke="#3c3c3c" stroke-width="1.2"/>
</svg>
<div class="t s9" style="left:695px;top:423px;color:#e8e8e8">无</div>
<div class="t s9" style="left:695px;top:441px;color:#e0e0e0">版权和联系信息</div>

<!-- color space -->
<div class="a" style="left:681px;top:491px;width:10px;height:10px;background:#d8d8d8;border-radius:1.5px"></div>
<svg style="left:682px;top:492px" width="8" height="8"><path d="M1.2 4l2 2 3.8-4.5" stroke="#333" stroke-width="1.5" fill="none"/></svg>
<div class="t s9" style="left:695px;top:490px;color:#e8e8e8">转换为 sRGB</div>
<div class="a" style="left:681px;top:508px;width:10px;height:10px;border:1px solid #6a6a6a;border-radius:1.5px;background:#4f4f4f"></div>
<div class="t s9" style="left:695px;top:507px;color:#e0e0e0">嵌入颜色配置文件</div>

<!-- footer -->
<div class="t s9" style="left:665px;top:568px;color:#c8c8c8">深入了解 <span style="text-decoration:underline">导出选项。</span></div>
<div class="a" style="left:699px;top:588px;width:51px;height:19px;border:1px solid #777;border-radius:10px"></div>
<div class="t s9" style="left:714px;top:592px;color:#f0f0f0">取消</div>
<div class="a" style="left:757px;top:588px;width:79px;height:19px;border:1px solid #cfcfcf;border-radius:10px"></div>
<div class="t s9" style="left:772px;top:592px;color:#f0f0f0">全部导出...</div>
</div>

<div id="overlay">
<!-- format list -->
<div class="a" style="left:761px;top:98px;width:37px;height:45px;background:#d3d3d3;border-left:1px solid #7d9bc0;border-bottom:1px solid #b8b8b8"></div>
<div class="a" style="left:761px;top:98px;width:37px;height:11px;background:#1e90ff"></div>
<div class="t s9" style="left:765px;top:96px;color:#ffffff">PNG</div>
<div class="t s9" style="left:765px;top:107px;color:#8c8c8c">JPG</div>
<div class="t s9" style="left:765px;top:119px;color:#6a6a6a">GIF</div>
<div class="t s9" style="left:765px;top:129px;color:#6a6a6a">SVG</div>
<!-- resample list -->
<div class="a" style="left:830px;top:276px;width:107px;height:87px;background:#d3d3d3;border:1px solid #7d9bc0"></div>
<div class="a" style="left:831px;top:350px;width:105px;height:12px;background:#1e90ff"></div>
<div class="t s9" style="left:834px;top:277px;color:#404040">两次立方</div>
<div class="t s9" style="left:834px;top:289px;color:#404040">两次立方（自动）</div>
<div class="t s9" style="left:834px;top:302px;color:#404040">两次立方（较锐利）</div>
<div class="t s9" style="left:834px;top:314px;color:#404040">两次立方（较平滑）</div>
<div class="t s9" style="left:834px;top:326px;color:#404040">两次线性</div>
<div class="t s9" style="left:834px;top:338px;color:#404040">邻近</div>
<div class="t s9" style="left:834px;top:350px;color:#ffffff">保留细节</div>
<svg style="left:0;top:0" width="1080" height="707">
<g fill="none" stroke="#f00000" stroke-width="2.6">
<rect x="692.6" y="117" width="115.9" height="25.6" rx="13" ry="12.8"/>
<rect x="694.1" y="149.6" width="118.9" height="36.7" rx="18" ry="18"/>
<rect x="680.9" y="275.2" width="150.8" height="21.2" rx="11" ry="10.6"/>
<rect x="675.6" y="417.1" width="122.5" height="37.9" rx="19" ry="19"/>
<rect x="672" y="485.8" width="130" height="37.5" rx="18.5" ry="18.5"/>
</g>
<g fill="none" stroke="#ececec" stroke-width="1.4" stroke-linecap="butt">
<path d="M673.6 126.4L679.3 121.2V138"/>
<path d="M673.6 162.5C673.8 160.2 676 158.7 679 158.7C682.2 158.7 684.4 160.6 684.4 163.3C684.4 165.8 682.8 167.3 680 169.6L673.6 175V175.7H685"/>
<path d="M659.8 280C660.6 277.8 662.7 276.5 665.6 276.5C668.8 276.5 671 278.2 671 280.8C671 283.3 669 284.8 665.8 284.8H664.6M665.8 284.8C669.4 284.8 671.6 286.5 671.6 289.4C671.6 292.3 669.1 294.1 665.7 294.1C662.6 294.1 660.4 292.7 659.4 290.5"/>
<path d="M662.6 445.5V427.7L653.3 440.6H666.4"/>
<path d="M663.8 497.6H655.6L654.4 505.3C655.6 504.3 657.4 503.6 659.3 503.6C662.6 503.6 665 506 665 509C665 512 662.6 514.2 659.2 514.2C656.4 514.2 654.3 513 653.4 510.8"/>
</g>
</svg>
</div>
</body></html>
